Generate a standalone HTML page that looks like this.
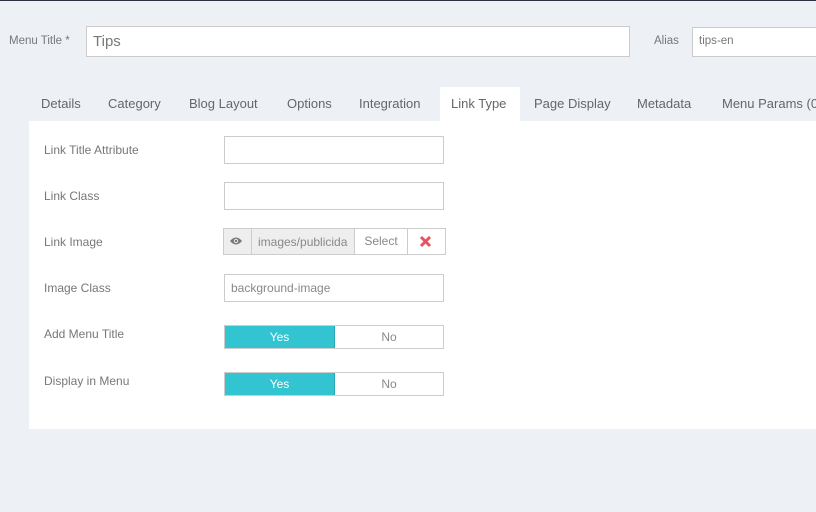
<!DOCTYPE html>
<html><head><style>
*{box-sizing:border-box;margin:0;padding:0}
body{width:816px;height:512px;background:#edf0f5;font-family:"Liberation Sans",sans-serif;position:relative;overflow:hidden;color:#555}
.a{position:absolute;white-space:nowrap}
.top{left:0;top:0;width:816px;height:1px;background:#2b3140}
.in{position:absolute;background:#fff;border:1px solid #ccc}
.lbl{position:absolute;font-size:12px;color:#777;left:44px;white-space:nowrap}
.tab{position:absolute;top:96px;font-size:13px;color:#666;white-space:nowrap}
.tog{position:absolute;left:224px;width:220px;height:24px;border:1px solid #ccc;background:#fff;font-size:12px}
.tog .y{position:absolute;left:0;top:0;width:110px;height:22px;background:#33c4d1;color:#fff;text-align:center;line-height:22px;border-right:1px solid #2aa8b3}
.tog .n{position:absolute;left:110px;top:0;width:108px;height:22px;text-align:center;line-height:22px;color:#888}
</style></head><body>
<div class="a top"></div>
<div class="a" style="left:9px;top:35px;font-size:11.5px;color:#777">Menu Title *</div>
<div class="in" style="left:86px;top:26px;width:544px;height:31px"></div>
<div class="a" style="left:93px;top:33px;font-size:15px;color:#777">Tips</div>
<div class="a" style="left:654px;top:35px;font-size:11.5px;color:#777">Alias</div>
<div class="in" style="left:692px;top:27px;width:130px;height:30px"></div>
<div class="a" style="left:699px;top:35px;font-size:11.5px;color:#777">tips-en</div>

<div class="a" style="left:440px;top:87px;width:80px;height:34px;background:#fff"></div>
<div class="tab" style="left:41px">Details</div>
<div class="tab" style="left:108px">Category</div>
<div class="tab" style="left:189px">Blog Layout</div>
<div class="tab" style="left:287px">Options</div>
<div class="tab" style="left:359px">Integration</div>
<div class="tab" style="left:451px">Link Type</div>
<div class="tab" style="left:534px">Page Display</div>
<div class="tab" style="left:637px">Metadata</div>
<div class="tab" style="left:722px">Menu Params (0</div>

<div class="a" style="left:29px;top:121px;width:787px;height:308px;background:#fff"></div>

<div class="lbl" style="top:143px">Link Title Attribute</div>
<div class="in" style="left:224px;top:136px;width:220px;height:28px"></div>
<div class="lbl" style="top:189px">Link Class</div>
<div class="in" style="left:224px;top:182px;width:220px;height:28px"></div>
<div class="lbl" style="top:235px">Link Image</div>
<div class="a" style="left:223px;top:228px;width:132px;height:27px;background:#eee;border:1px solid #ccc"></div>
<div class="a" style="left:251px;top:228px;width:1px;height:27px;background:#ccc"></div>
<svg class="a" style="left:229px;top:235px" width="14" height="12" viewBox="0 0 14 12"><path d="M1 6Q7 -1 13 6Q7 13 1 6Z" fill="#777"/><circle cx="7" cy="6" r="2.2" fill="#eee"/><circle cx="7" cy="6" r="1.2" fill="#777"/></svg>
<div class="a" style="left:258px;top:235px;font-size:12px;color:#888">images/publicida</div>
<div class="a" style="left:354px;top:228px;width:54px;height:27px;background:#fff;border:1px solid #ccc;font-size:12px;color:#888;text-align:center;line-height:25px">Select</div>
<div class="a" style="left:407px;top:228px;width:39px;height:27px;background:#fff;border:1px solid #ccc"></div>
<svg class="a" style="left:419px;top:235px" width="13" height="13" viewBox="0 0 13 13"><path d="M2 2L11 11M11 2L2 11" stroke="#e0555f" stroke-width="3"/></svg>
<div class="lbl" style="top:281px">Image Class</div>
<div class="in" style="left:224px;top:274px;width:220px;height:28px"></div>
<div class="a" style="left:231px;top:281px;font-size:12px;color:#888">background-image</div>

<div class="lbl" style="top:327px">Add Menu Title</div>
<div class="tog" style="top:325px"><div class="y">Yes</div><div class="n">No</div></div>
<div class="lbl" style="top:374px">Display in Menu</div>
<div class="tog" style="top:372px"><div class="y">Yes</div><div class="n">No</div></div>
</body></html>
